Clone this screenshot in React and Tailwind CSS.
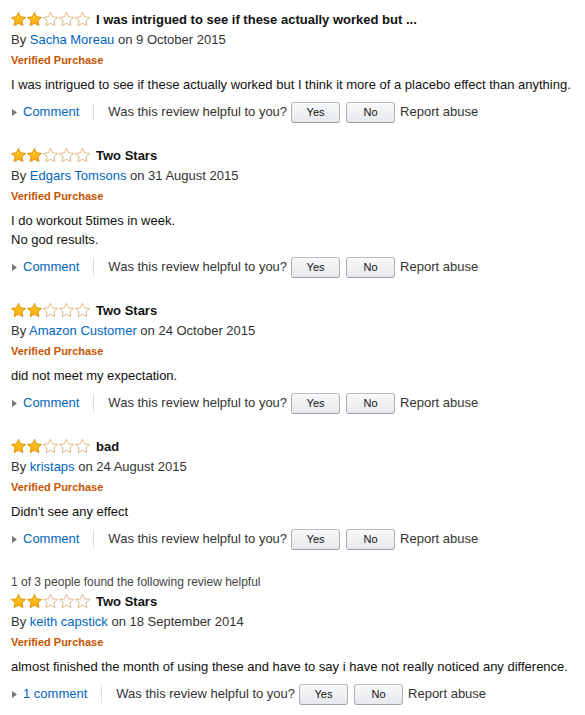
import React from "react";

const reviews = [
  {
    title: "I was intrigued to see if these actually worked but ...",
    author: "Sacha Moreau",
    date: "9 October 2015",
    body: ["I was intrigued to see if these actually worked but I think it more of a placebo effect than anything."],
    comment: "Comment",
  },
  {
    title: "Two Stars",
    author: "Edgars Tomsons",
    date: "31 August 2015",
    body: ["I do workout 5times in week.", "No god results."],
    comment: "Comment",
  },
  {
    title: "Two Stars",
    author: "Amazon Customer",
    date: "24 October 2015",
    body: ["did not meet my expectation."],
    comment: "Comment",
  },
  {
    title: "bad",
    author: "kristaps",
    date: "24 August 2015",
    body: ["Didn't see any effect"],
    comment: "Comment",
  },
  {
    helpful: "1 of 3 people found the following review helpful",
    title: "Two Stars",
    author: "keith capstick",
    date: "18 September 2014",
    body: ["almost finished the month of using these and have to say i have not really noticed any difference."],
    comment: "1 comment",
  },
];

function Star({ filled }) {
  return (
    <svg width="15" height="15" viewBox="0 0 24 24" className="block">
      <defs>
        <linearGradient id="sg" x1="0" y1="0" x2="0" y2="1">
          <stop offset="0" stopColor="#ffcf3a" />
          <stop offset="1" stopColor="#ffa600" />
        </linearGradient>
      </defs>
      <path
        d="M12 0.6l3.4 7.1 7.8 1-5.7 5.3 1.5 7.7L12 18l-7 3.7 1.5-7.7L0.8 8.7l7.8-1z"
        fill={filled ? "url(#sg)" : "#ffffff"}
        stroke={filled ? "#dc8e00" : "#d6b17c"}
        strokeWidth="1.5"
        strokeLinejoin="round"
      />
    </svg>
  );
}

function Stars() {
  return (
    <div className="flex items-center gap-px">
      <Star filled />
      <Star filled />
      <Star />
      <Star />
      <Star />
    </div>
  );
}

function Btn({ children }) {
  return (
    <button className="h-[21px] w-[49px] rounded-[3px] border border-[#adb1b8] border-t-[#b8bcc2] border-b-[#9da1a7] bg-linear-to-b from-[#f8f9fa] to-[#e6e8eb] text-[11px] leading-none text-[#111] shadow-[inset_0_1px_0_rgba(255,255,255,0.6)]">
      {children}
    </button>
  );
}

function Review({ r, first }) {
  return (
    <div className={first ? "" : "mt-[21px]"}>
      {r.helpful && (
        <div className="h-[19px] text-[12px] leading-[21px] text-[#444]">{r.helpful}</div>
      )}
      <div className="flex h-[21px] items-center">
        <Stars />
        <span className="ml-[6px] text-[13px] font-bold text-[#111]">{r.title}</span>
      </div>
      <div className="h-[20px] text-[13px] leading-[20px] text-[#333]">
        By <span className="text-[#0066c0]">{r.author}</span> on {r.date}
      </div>
      <div className="h-[20px] text-[11px] font-bold leading-[20px] text-[#c45500]">Verified Purchase</div>
      <div className="mt-[5px] text-[13px] leading-[19px] text-[#111]">
        {r.body.map((l, i) => (
          <div key={i}>{l}</div>
        ))}
      </div>
      <div className="mt-[6px] flex h-[24px] items-center text-[13px] text-[#333]">
        <svg width="5" height="7" viewBox="0 0 5 7" className="ml-px">
          <path d="M0 0L5 3.5L0 7z" fill="#777" />
        </svg>
        <span className="ml-[6px] text-[#0066c0]">{r.comment}</span>
        <span className="mx-[14px] h-[18px] border-l border-[#ddd]" />
        <span>Was this review helpful to you?</span>
        <span className="ml-[4px] flex gap-[6px]">
          <Btn>Yes</Btn>
          <Btn>No</Btn>
        </span>
        <span className="ml-[5px]">Report abuse</span>
      </div>
    </div>
  );
}

export default function App() {
  return (
    <div
      className="h-[715px] w-[585px] bg-white px-[11px] pt-[9px]"
      style={{ fontFamily: '"Liberation Sans", Arial, sans-serif' }}
    >
      {reviews.map((r, i) => (
        <Review key={i} r={r} first={i === 0} />
      ))}
    </div>
  );
}
